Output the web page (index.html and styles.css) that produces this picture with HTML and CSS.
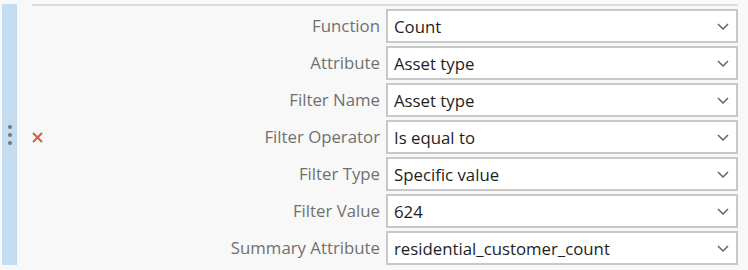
FILE: index.html
```html
<!DOCTYPE html>
<html lang="en">
<head>
  <meta charset="UTF-8">
  <title>Filter settings</title>
  <link rel="stylesheet" href="styles.css">
</head>
<body>
  <div class="panel">
    <div class="handle">
      <span class="dot"></span>
      <span class="dot"></span>
      <span class="dot"></span>
    </div>
    <div class="main">
      <div class="remove">
        <svg width="11" height="11" viewBox="0 0 11 11">
          <path d="M1 1 L10 10 M10 1 L1 10" stroke="#d5603a" stroke-width="2" fill="none"/>
        </svg>
      </div>
      <div class="fields">
        <label class="field-label">Function</label>
        <div class="select"><span>Count</span><svg class="chevron" width="12" height="7" viewBox="0 0 12 7"><path d="M1 1 L6 6 L11 1" stroke="#666" stroke-width="1.5" fill="none"/></svg></div>

        <label class="field-label">Attribute</label>
        <div class="select"><span>Asset type</span><svg class="chevron" width="12" height="7" viewBox="0 0 12 7"><path d="M1 1 L6 6 L11 1" stroke="#666" stroke-width="1.5" fill="none"/></svg></div>

        <label class="field-label">Filter Name</label>
        <div class="select"><span>Asset type</span><svg class="chevron" width="12" height="7" viewBox="0 0 12 7"><path d="M1 1 L6 6 L11 1" stroke="#666" stroke-width="1.5" fill="none"/></svg></div>

        <label class="field-label">Filter Operator</label>
        <div class="select"><span>Is equal to</span><svg class="chevron" width="12" height="7" viewBox="0 0 12 7"><path d="M1 1 L6 6 L11 1" stroke="#666" stroke-width="1.5" fill="none"/></svg></div>

        <label class="field-label">Filter Type</label>
        <div class="select"><span>Specific value</span><svg class="chevron" width="12" height="7" viewBox="0 0 12 7"><path d="M1 1 L6 6 L11 1" stroke="#666" stroke-width="1.5" fill="none"/></svg></div>

        <label class="field-label">Filter Value</label>
        <div class="select"><span>624</span><svg class="chevron" width="12" height="7" viewBox="0 0 12 7"><path d="M1 1 L6 6 L11 1" stroke="#666" stroke-width="1.5" fill="none"/></svg></div>

        <label class="field-label">Summary Attribute</label>
        <div class="select"><span>residential_customer_count</span><svg class="chevron" width="12" height="7" viewBox="0 0 12 7"><path d="M1 1 L6 6 L11 1" stroke="#666" stroke-width="1.5" fill="none"/></svg></div>
      </div>
    </div>
  </div>
</body>
</html>
```

FILE: styles.css
```css
/* Panel de filtros */
body {
  margin: 0;
  background-color: #f8f8f8;
  font-family: "Open Sans", Arial, sans-serif;
  font-size: 16.8px;
}
.panel {
  display: flex;
  padding-top: 4px;
}
.handle {
  width: 15px;
  height: 261px;
  margin-left: 2px;
  background-color: #c4dcf0;
  display: flex;
  flex-direction: column;
  align-items: center;
  justify-content: center;
  gap: 4px;
}
.dot {
  width: 4px;
  height: 4px;
  border-radius: 50%;
  background-color: #777;
}
.main {
  width: 706px;
  margin-left: 15px;
  border-top: 2px solid #dcdcdc;
  padding-top: 3px;
  display: flex;
  align-items: center;
}
.remove {
  width: 11px;
  height: 11px;
  display: flex;
}
.fields {
  flex: 1;
  display: grid;
  grid-template-columns: 1fr 352px;
  column-gap: 6px;
  row-gap: 3px;
}
.field-label {
  text-align: right;
  color: #707070;
  line-height: 34px;
}
.select {
  height: 34px;
  box-sizing: border-box;
  border: 2px solid #c8c8c8;
  background-color: #fff;
  color: #1e1e1e;
  display: flex;
  align-items: center;
  justify-content: space-between;
  padding: 0 7px 0 6px;
}
.chevron {
  flex-shrink: 0;
}
```
